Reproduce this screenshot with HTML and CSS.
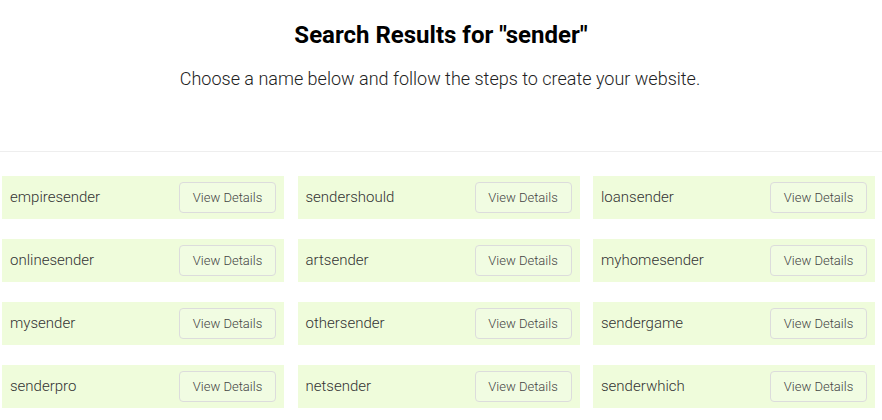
FILE: index.html
```html
<!DOCTYPE html>
<html>
<head>
<meta charset="utf-8">
<link rel="stylesheet" href="styles.css">
</head>
<body>
<header class="head">
  <h1 class="title">Search Results for "sender"</h1>
  <p class="subtitle">Choose a name below and follow the steps to create your website.</p>
</header>
<main class="results">
  <div class="card"><span class="name">empiresender</span><button class="btn">View Details</button></div>
  <div class="card"><span class="name">sendershould</span><button class="btn">View Details</button></div>
  <div class="card"><span class="name">loansender</span><button class="btn">View Details</button></div>
  <div class="card"><span class="name">onlinesender</span><button class="btn">View Details</button></div>
  <div class="card"><span class="name">artsender</span><button class="btn">View Details</button></div>
  <div class="card"><span class="name">myhomesender</span><button class="btn">View Details</button></div>
  <div class="card"><span class="name">mysender</span><button class="btn">View Details</button></div>
  <div class="card"><span class="name">othersender</span><button class="btn">View Details</button></div>
  <div class="card"><span class="name">sendergame</span><button class="btn">View Details</button></div>
  <div class="card"><span class="name">senderpro</span><button class="btn">View Details</button></div>
  <div class="card"><span class="name">netsender</span><button class="btn">View Details</button></div>
  <div class="card"><span class="name">senderwhich</span><button class="btn">View Details</button></div>
</main>
</body>
</html>
```
FILE: styles.css
```css
html, body {
  margin: 0;
  padding: 0;
  background: #fff;
  font-family: Roboto, "Liberation Sans", sans-serif;
  color: #222;
}
.head {
  text-align: center;
  border-bottom: 1px solid #eeeeee;
  padding-top: 20px;
  box-sizing: border-box;
  height: 152px;
}
.title {
  margin: 0;
  font-size: 24px;
  font-weight: 700;
  line-height: 30px;
  color: #000;
}
.subtitle {
  margin: 16px 0 0 -2px;
  font-size: 18px;
  font-weight: 300;
  line-height: 26px;
  color: #222;
}
.results {
  display: grid;
  grid-template-columns: 282px 282px 282px;
  column-gap: 13.5px;
  row-gap: 20px;
  padding: 24px 0 0 2px;
}
.card {
  background: #effcdb;
  height: 43px;
  display: flex;
  align-items: center;
  justify-content: space-between;
  padding: 0 8px 1px 8px;
  box-sizing: border-box;
}
.name {
  font-size: 15px;
  font-weight: 300;
  color: #333;
}
.btn {
  width: 97px;
  height: 31px;
  border: 1px solid #dcdcdc;
  border-radius: 4px;
  background: #f1fce2;
  color: #444;
  font-family: Roboto, "Liberation Sans", sans-serif;
  font-size: 13px;
  font-weight: 300;
  padding: 0;
}
```
